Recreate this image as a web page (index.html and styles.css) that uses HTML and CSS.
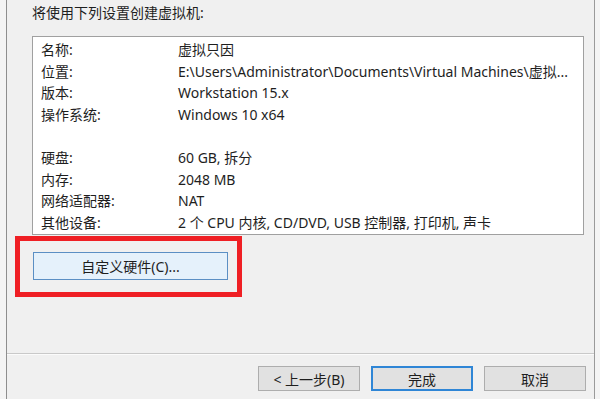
FILE: index.html
```
<!DOCTYPE html>
<html lang="zh-CN">
<head>
<meta charset="utf-8">
<title>新建虚拟机向导</title>
<link rel="stylesheet" href="styles.css">
</head>
<body>
<div class="dialog">
  <div class="content">
    <div class="heading">将使用下列设置创建虚拟机:</div>
    <div class="summary">
      <div class="row"><span class="label">名称:</span><span class="value">虚拟只因</span></div>
      <div class="row"><span class="label">位置:</span><span class="value">E:\Users\Administrator\Documents\Virtual Machines\虚拟...</span></div>
      <div class="row"><span class="label">版本:</span><span class="value">Workstation 15.x</span></div>
      <div class="row"><span class="label">操作系统:</span><span class="value">Windows 10 x64</span></div>
      <div class="row"><span class="label"></span><span class="value"></span></div>
      <div class="row"><span class="label">硬盘:</span><span class="value">60 GB, 拆分</span></div>
      <div class="row"><span class="label">内存:</span><span class="value">2048 MB</span></div>
      <div class="row"><span class="label">网络适配器:</span><span class="value">NAT</span></div>
      <div class="row"><span class="label">其他设备:</span><span class="value">2 个 CPU 内核, CD/DVD, USB 控制器, 打印机, 声卡</span></div>
    </div>
    <div class="highlight">
      <button class="btn custom">自定义硬件(C)...</button>
    </div>
  </div>
  <div class="separator"></div>
  <div class="actions">
    <button class="btn nav">&lt; 上一步(B)</button>
    <button class="btn nav primary">完成</button>
    <button class="btn nav">取消</button>
  </div>
</div>
</body>
</html>
```
FILE: styles.css
```
html, body {
  margin: 0;
  padding: 0;
}
body {
  width: 600px;
  height: 399px;
  overflow: hidden;
  background: #f4f4f4;
  font-family: "Noto Sans", "Noto Sans CJK SC", sans-serif;
  font-size: 14px;
  color: #1e1e1e;
}
.dialog {
  margin-left: 6px;
  width: 589px;
  height: 399px;
  box-sizing: border-box;
  border-left: 1px solid #8e8e8e;
  border-right: 1px solid #9a9a9a;
  background: #f0f0f0;
  display: flex;
  flex-direction: column;
}
.content {
  padding-left: 8px;
  display: flex;
  flex-direction: column;
  align-items: flex-start;
}
.heading {
  margin-top: 3px;
  margin-left: 17px;
  line-height: 20px;
}
.summary {
  margin-top: 13px;
  margin-left: 17px;
  width: 552px;
  height: 199px;
  box-sizing: border-box;
  border: 1px solid #a0a0a0;
  background: #ffffff;
  padding: 2px 0 0 8px;
}
.row {
  display: flex;
  height: 21.6px;
  line-height: 21.6px;
  white-space: nowrap;
}
.label {
  width: 137px;
  flex: none;
}
.value {
  flex: none;
}
.highlight {
  margin-top: 1px;
  width: 227px;
  height: 61px;
  box-sizing: border-box;
  border: 5px solid #ef1f24;
  padding: 11px 0 0 13px;
}
.btn {
  font-family: "Noto Sans", "Noto Sans CJK SC", sans-serif;
  font-size: 14px;
  color: #1e1e1e;
  padding: 0;
  margin: 0;
  box-sizing: border-box;
}
.custom {
  width: 195px;
  height: 28px;
  background: #e5f1fb;
  border: 1px solid #5b8fc4;
}
.separator {
  margin-top: 56px;
  height: 1px;
  background: #c9c9c9;
  border-bottom: 1px solid #fbfbfb;
}
.actions {
  margin-top: 11px;
  display: flex;
  justify-content: flex-end;
  gap: 11px;
  padding-right: 8px;
}
.nav {
  width: 102px;
  height: 25px;
  background: #e1e1e1;
  border: 1px solid #adadad;
}
.primary {
  border: 2px solid #2f86d6;
}
```
